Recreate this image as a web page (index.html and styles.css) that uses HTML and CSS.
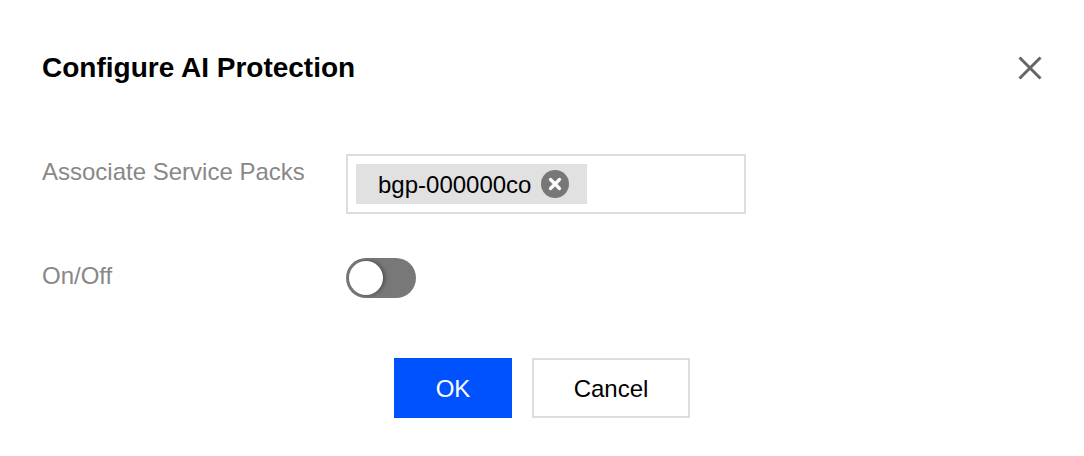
FILE: index.html
```html
<!DOCTYPE html>
<html lang="en">
<head>
<meta charset="utf-8">
<title>Configure AI Protection</title>
<link rel="stylesheet" href="styles.css">
</head>
<body>
<div class="dialog">
  <div class="dialog-header">
    <h1 class="dialog-title">Configure AI Protection</h1>
    <button class="dialog-close" aria-label="Close">
      <svg width="24" height="24" viewBox="0 0 24 24"><path d="M1.5 1.5L22.5 22.5M22.5 1.5L1.5 22.5" stroke="#666" stroke-width="3" fill="none"/></svg>
    </button>
  </div>
  <div class="dialog-body">
    <div class="form-row">
      <label class="form-label">Associate Service Packs</label>
      <div class="tag-input">
        <span class="tag">
          <span class="tag-text">bgp-000000co</span>
          <svg class="tag-remove" width="28" height="28" viewBox="0 0 28 28"><circle cx="14" cy="14" r="14" fill="#777"/><path d="M9.5 9.5L18.5 18.5M18.5 9.5L9.5 18.5" stroke="#fff" stroke-width="3.2" stroke-linecap="round" fill="none"/></svg>
        </span>
      </div>
    </div>
    <div class="form-row form-row-switch">
      <label class="form-label">On/Off</label>
      <span class="switch"><span class="switch-knob"></span></span>
    </div>
  </div>
  <div class="dialog-footer">
    <button class="btn btn-primary">OK</button>
    <button class="btn btn-default">Cancel</button>
  </div>
</div>
</body>
</html>
```
FILE: styles.css
```css
html, body {
  margin: 0;
  padding: 0;
  background: #fff;
}
body {
  font-family: "Liberation Sans", Arial, Helvetica, sans-serif;
  color: #000;
}
.dialog {
  padding: 48px 42px 0 42px;
}
.dialog-header {
  display: flex;
  align-items: center;
  justify-content: space-between;
  height: 40px;
}
.dialog-title {
  margin: 0;
  font-size: 28px;
  font-weight: bold;
  line-height: 40px;
}
.dialog-close {
  width: 24px;
  height: 24px;
  padding: 0;
  border: 0;
  background: none;
  display: block;
}
.dialog-close svg {
  display: block;
}
.dialog-body {
  margin-top: 66px;
  display: flex;
  flex-direction: column;
  gap: 44px;
}
.form-row {
  display: flex;
  align-items: flex-start;
}
.form-label {
  width: 304px;
  flex: none;
  font-size: 24px;
  line-height: 36px;
  color: #888;
}
.tag-input {
  box-sizing: border-box;
  width: 400px;
  height: 60px;
  border: 2px solid #ddd;
  padding: 8px;
  display: flex;
  align-items: flex-start;
}
.tag {
  display: flex;
  align-items: center;
  height: 40px;
  box-sizing: border-box;
  padding: 0 18px 0 22px;
  background: #e1e1e1;
  gap: 10px;
}
.tag-text {
  font-size: 24px;
  line-height: 40px;
  color: #000;
  padding-top: 1px;
}
.tag-remove {
  display: block;
  flex: none;
}
.switch {
  display: block;
  width: 70px;
  height: 40px;
  border-radius: 20px;
  background: #787878;
  position: relative;
}
.switch-knob {
  position: absolute;
  left: 3px;
  top: 3px;
  width: 34px;
  height: 34px;
  border-radius: 50%;
  background: #fff;
  box-shadow: 2px 0 4px rgba(0, 0, 0, 0.35);
}
.dialog-footer {
  margin-top: 60px;
  display: flex;
  justify-content: center;
  gap: 20px;
}
.btn {
  box-sizing: border-box;
  height: 60px;
  font-family: inherit;
  font-size: 24px;
  line-height: 34px;
  padding: 2px 0 0;
  cursor: pointer;
}
.btn-primary {
  width: 118px;
  background: #0052ff;
  color: #fff;
  border: 0;
}
.btn-default {
  width: 158px;
  background: #fff;
  color: #000;
  border: 2px solid #ddd;
}
```
